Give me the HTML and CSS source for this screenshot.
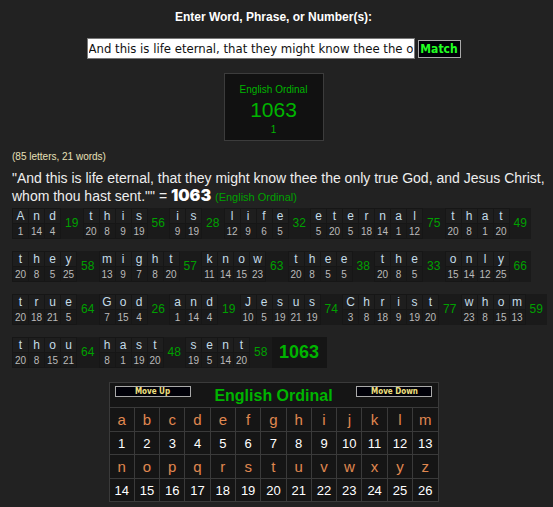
FILE: index.html
```
<!DOCTYPE html>
<html lang="en">
<head>
    <meta charset="UTF-8">
    <meta name="viewport" content="width=device-width, initial-scale=1.0">
    <title>Gematria Calculator</title>
    <link rel="stylesheet" href="styles.css">
</head>
<body>
    <form class="entry">
        <label class="entry-label" for="phrase">Enter Word, Phrase, or Number(s):</label>
        <div class="entry-row">
            <input type="text" id="phrase" class="entry-box" value="And this is life eternal, that they might know thee the only true God, and Jesus Christ, whom thou hast sent.&quot;">
            <button type="button" class="match-button">Match</button>
        </div>
    </form>

    <div class="result">
        <div class="result-name">English Ordinal</div>
        <div class="result-total">1063</div>
        <div class="result-count">1</div>
    </div>

    <div class="breakdown">
        <div class="letter-count">(85 letters, 21 words)</div>
        <div class="phrase">
            "And this is life eternal, that they might know thee the only true God, and Jesus Christ, whom thou hast sent."" = <span class="phrase-total">1063</span> <span class="phrase-cipher">(English Ordinal)</span>
        </div>
        <div id="words" class="words"></div>
    </div>

    <table class="chart">
        <thead>
            <tr>
                <th colspan="13">
                    <div class="chart-header">
                        <button type="button" class="move-button">Move Up</button>
                        <span class="chart-title">English Ordinal</span>
                        <button type="button" class="move-button">Move Down</button>
                    </div>
                </th>
            </tr>
        </thead>
        <tbody id="chart-body"></tbody>
    </table>

    <script>
        const words = 'And this is life eternal that they might know thee the only true God and Jesus Christ whom thou hast sent'.split(' ');
        const alphabet = 'abcdefghijklmnopqrstuvwxyz';

        function letterValue(letter) {
            return alphabet.indexOf(letter.toLowerCase()) + 1;
        }

        // One small table per word: letters, values, and the word sum
        function wordTable(word) {
            const letters = word.split('');
            const sum = letters.reduce((total, l) => total + letterValue(l), 0);
            return '<table class="word"><tr>' +
                letters.map(l => '<td class="letter">' + l + '</td>').join('') +
                '<td class="word-sum" rowspan="2">' + sum + '</td></tr><tr>' +
                letters.map(l => '<td class="value">' + letterValue(l) + '</td>').join('') +
                '</tr></table>';
        }

        function buildBreakdown() {
            const total = words.join('').split('').reduce((t, l) => t + letterValue(l), 0);
            document.getElementById('words').innerHTML =
                words.map(wordTable).join('') + '<div class="grand-total">' + total + '</div>';
        }

        // Two rows of thirteen letters with their values below
        function buildChart() {
            let rows = '';
            for (let i = 0; i < 26; i += 13) {
                const half = alphabet.slice(i, i + 13).split('');
                rows += '<tr class="chart-letters">' + half.map(l => '<td>' + l + '</td>').join('') + '</tr>';
                rows += '<tr class="chart-values">' + half.map(l => '<td>' + letterValue(l) + '</td>').join('') + '</tr>';
            }
            document.getElementById('chart-body').innerHTML = rows;
        }

        buildBreakdown();
        buildChart();
    </script>
</body>
</html>
```
FILE: styles.css
```
* {
    box-sizing: border-box;
}

body {
    margin: 0;
    padding: 9px 6px 6px 0;
    background-color: #222;
    color: #fff;
    font-family: "Liberation Sans", Arial, sans-serif;
}

button {
    background-color: #000008;
    border: 1px solid #aaa;
    padding: 0;
    cursor: pointer;
    font-family: "DejaVu Sans Condensed", Tahoma, sans-serif;
    font-weight: bold;
}

/* Phrase entry */
.entry {
    text-align: center;
}

.entry-label {
    display: block;
    font-size: 12px;
    font-weight: bold;
    line-height: 16px;
}

.entry-row {
    display: flex;
    justify-content: center;
    align-items: center;
    gap: 3px;
    margin-top: 13px;
}

.entry-box {
    width: 328px;
    height: 21px;
    padding: 0 1px;
    border: 1px solid #777;
    background-color: #fff;
    color: #111;
    font-family: "DejaVu Sans Condensed", Tahoma, sans-serif;
    font-size: 13px;
}

.match-button {
    width: 43px;
    height: 18px;
    color: #2f2;
    font-size: 12px;
    line-height: 16px;
}

/* Result box */
.result {
    width: 100px;
    margin: 14px auto 0;
    padding: 9px 0 4px;
    border: 1px solid #3c3c3c;
    background-color: #111;
    color: #00b400;
    text-align: center;
}

.result-name {
    font-size: 10px;
    line-height: 14px;
}

.result-total {
    font-size: 21px;
    line-height: 26px;
}

.result-count {
    font-size: 10px;
    line-height: 13px;
}

/* Breakdown */
.breakdown {
    padding-left: 12px;
}

.letter-count {
    margin-top: 8px;
    color: #e8e0b8;
    font-size: 10px;
    line-height: 16px;
}

.phrase {
    margin-top: 4px;
    color: #eee;
    font-size: 14px;
    line-height: 18px;
}

.phrase-total {
    color: #fff;
    font-family: Inter, "Arial Black", sans-serif;
    font-size: 16px;
    font-weight: 900;
    line-height: 16px;
}

.phrase-cipher {
    color: #00a000;
    font-size: 11px;
}

/* Runs a little past the body padding on the right */
.words {
    display: flex;
    flex-wrap: wrap;
    row-gap: 12px;
    margin-top: 2px;
    margin-right: -6px;
}

.word {
    border-collapse: collapse;
    background-color: #1a1a1a;
    text-align: center;
}

.word td {
    height: 15px;
    padding: 0;
    line-height: 13px;
}

.word .letter,
.word .value {
    width: 16px;
    border: 1px solid #161616;
}

.word .letter {
    background-color: #1e1e1e;
    color: #c4dce8;
    font-size: 12px;
}

.word .value {
    color: #bbb;
    font-size: 10px;
}

.word .word-sum {
    width: 22px;
    color: #00a000;
    font-size: 12px;
}

.grand-total {
    width: 55px;
    background-color: #151515;
    color: #00b400;
    font-size: 18px;
    font-weight: bold;
    line-height: 30px;
    text-align: center;
}

/* Cipher chart */
.chart {
    width: 330px;
    margin: 14px auto 0;
    border-collapse: collapse;
    table-layout: fixed;
    background-color: #151515;
    text-align: center;
}

.chart th,
.chart td {
    padding: 0;
    border: 1px solid #3a3a3a;
}

.chart-header {
    display: flex;
    justify-content: space-between;
    align-items: flex-start;
    height: 24px;
    padding: 3px 5px 0;
}

.chart-title {
    color: #00b400;
    font-size: 16px;
    line-height: 20px;
}

.move-button {
    width: 76px;
    height: 11px;
    color: #f0e080;
    font-size: 8px;
    line-height: 9px;
}

.chart-letters td {
    height: 24px;
    color: #e08850;
    font-size: 15px;
}

.chart-values td {
    height: 23px;
    font-size: 13px;
}
```
